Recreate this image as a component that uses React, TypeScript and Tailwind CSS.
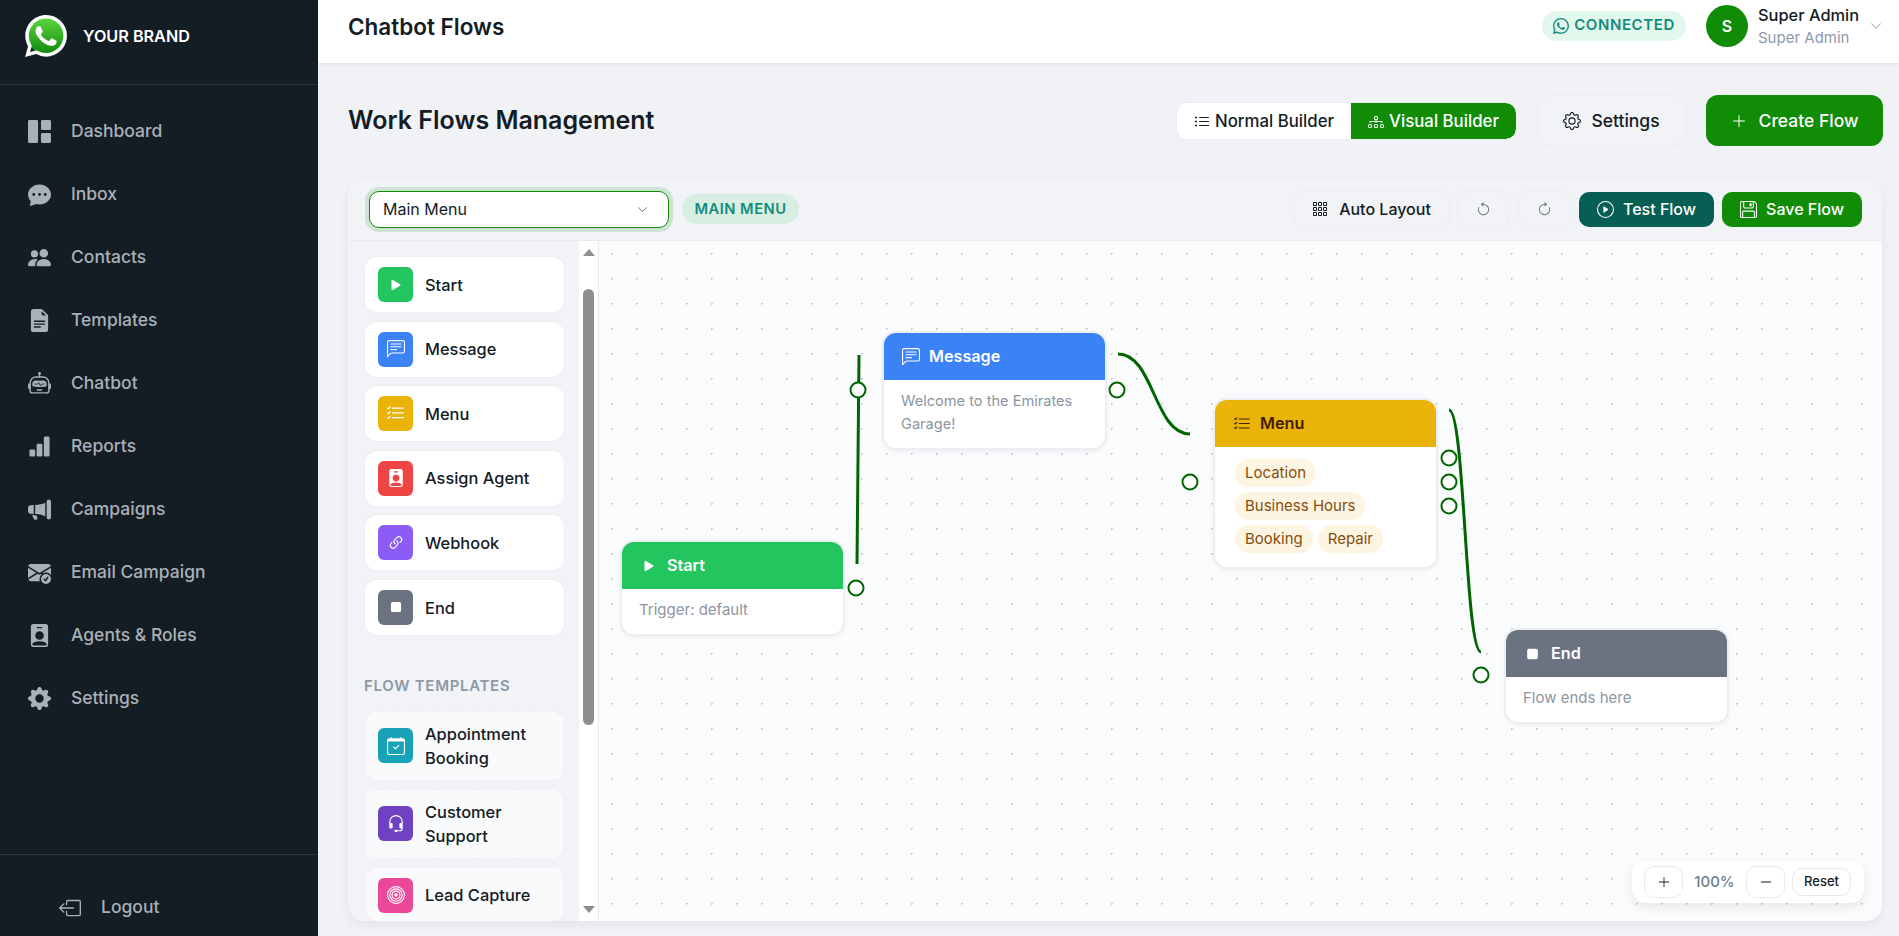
import React from "react";
import {
  BsGrid1X2Fill, BsChatDotsFill, BsPeopleFill, BsFileEarmarkTextFill, BsRobot, BsBarChartFill, BsMegaphoneFill,
  BsEnvelopeCheckFill, BsPersonBadgeFill, BsGearFill, BsBoxArrowLeft, BsWhatsapp, BsChevronDown, BsListUl,
  BsDiagram3, BsGear, BsPlusLg, BsDashLg, BsGrid3X3Gap, BsArrowCounterclockwise, BsArrowClockwise, BsPlayCircle, BsFloppy,
  BsPlayFill, BsChatLeftText, BsListCheck, BsLink45Deg, BsStopFill, BsCalendarCheck, BsHeadset, BsBullseye,
} from "react-icons/bs";

const nav: [React.ComponentType<{ className?: string }>, string][] = [
  [BsGrid1X2Fill, "Dashboard"],
  [BsChatDotsFill, "Inbox"],
  [BsPeopleFill, "Contacts"],
  [BsFileEarmarkTextFill, "Templates"],
  [BsRobot, "Chatbot"],
  [BsBarChartFill, "Reports"],
  [BsMegaphoneFill, "Campaigns"],
  [BsEnvelopeCheckFill, "Email Campaign"],
  [BsPersonBadgeFill, "Agents & Roles"],
  [BsGearFill, "Settings"],
];

const palette: [React.ComponentType<{ className?: string }>, string, string, string][] = [
  [BsPlayFill, "Start", "bg-[#22c55e]", "w-[18px] h-[18px]"],
  [BsChatLeftText, "Message", "bg-[#3b82f6]", "w-[18px] h-[18px]"],
  [BsListCheck, "Menu", "bg-[#eab308]", "w-[19px] h-[19px]"],
  [BsPersonBadgeFill, "Assign Agent", "bg-[#ef4444]", "w-[18px] h-[18px]"],
  [BsLink45Deg, "Webhook", "bg-[#8b5cf6]", "w-[18px] h-[18px]"],
  [BsStopFill, "End", "bg-[#6b7280]", "w-[18px] h-[18px]"],
];

const templates: [React.ComponentType<{ className?: string }>, string, string, string][] = [
  [BsCalendarCheck, "Appointment Booking", "bg-[#17a2b8]", "h-[70px]"],
  [BsHeadset, "Customer Support", "bg-[#6f42c1]", "h-[70px]"],
  [BsBullseye, "Lead Capture", "bg-[#ec4899] ", "h-[55px] pt-[2px]"],
];

function Logo() {
  return (
    <svg viewBox="0 0 24 24" className="w-[42px] h-[42px] shrink-0">
      <defs>
        <linearGradient id="wa" x1="0" y1="0" x2="0" y2="1">
          <stop offset="0" stopColor="#5fd63f" />
          <stop offset="1" stopColor="#0c8a0c" />
        </linearGradient>
      </defs>
      <circle cx="12" cy="12" r="10.6" fill="url(#wa)" />
      <path
        fill="#fff"
        d="M17.472 14.382c-.297-.149-1.758-.867-2.03-.967-.273-.099-.471-.148-.67.15-.197.297-.767.966-.94 1.164-.173.199-.347.223-.644.075-.297-.15-1.255-.463-2.39-1.475-.883-.788-1.48-1.761-1.653-2.059-.173-.297-.018-.458.13-.606.134-.133.298-.347.446-.52.149-.174.198-.298.298-.497.099-.198.05-.371-.025-.52-.075-.149-.669-1.612-.916-2.207-.242-.579-.487-.5-.669-.51-.173-.008-.371-.01-.57-.01-.198 0-.52.074-.792.372-.272.297-1.04 1.016-1.04 2.479 0 1.462 1.065 2.875 1.213 3.074.149.198 2.096 3.2 5.077 4.487.709.306 1.262.489 1.694.625.712.227 1.36.195 1.871.118.571-.085 1.758-.719 2.006-1.413.248-.694.248-1.289.173-1.413-.074-.124-.272-.198-.57-.347m-5.421 7.403h-.004a9.87 9.87 0 01-5.031-1.378l-.361-.214-3.741.982.998-3.648-.235-.374a9.86 9.86 0 01-1.51-5.26c.001-5.45 4.436-9.884 9.888-9.884 2.64 0 5.122 1.03 6.988 2.898a9.825 9.825 0 012.893 6.994c-.003 5.45-4.437 9.884-9.885 9.884m8.413-18.297A11.815 11.815 0 0012.05 0C5.495 0 .16 5.335.157 11.892c0 2.096.547 4.142 1.588 5.945L.057 24l6.305-1.654a11.882 11.882 0 005.683 1.448h.005c6.554 0 11.89-5.335 11.893-11.893a11.821 11.821 0 00-3.48-8.413Z"
      />
    </svg>
  );
}

function Port({ className }: { className: string }) {
  return <div className={"absolute w-[17px] h-[17px] rounded-full border-2 border-[#006400] bg-white -translate-x-1/2 -translate-y-1/2 " + className} />;
}

function Node({ pos, head, icon, title, titleColor, children }: { pos: string; head: string; icon: React.ReactNode; title: string; titleColor: string; children: React.ReactNode }) {
  return (
    <div className={"absolute w-[221px] rounded-[12px] bg-white shadow-[0_0_0_2px_#eceef1,0_2px_6px_rgba(0,0,0,0.08)] overflow-hidden " + pos}>
      <div className={"h-[47px] flex items-center gap-[9px] pl-[17px] text-[16.2px] font-semibold " + head + " " + titleColor}>
        <span className="w-[19px] flex justify-center">{icon}</span>
        <span>{title}</span>
      </div>
      {children}
    </div>
  );
}

function Chip({ children }: { children: React.ReactNode }) {
  return <span className="h-[28px] px-[10px] flex items-center rounded-full bg-[#fdf5e2] text-[#854d0e] text-[15px]">{children}</span>;
}

export default function App() {
  return (
    <div className="flex h-[936px] w-full overflow-hidden bg-[#f0f2f5] font-['Inter',sans-serif] text-[#141c24]">
      <aside className="w-[318px] shrink-0 bg-[#141c24] flex flex-col">
        <div className="h-[85px] border-b border-[#2a323b] flex items-center pl-[25px] pb-[13px] gap-[16px]">
          <Logo />
          <span className="text-white text-[16.2px] font-semibold pt-[2px]">YOUR BRAND</span>
        </div>
        <nav className="pt-[15px] flex-1">
          {nav.map(([Icon, label]) => (
            <div key={label} className="h-[63px] flex items-center pl-[28px] gap-[20px] text-[#a9b0b8] text-[17.5px] font-medium">
              <Icon className="w-[23px] h-[23px] shrink-0" />
              <span>{label}</span>
            </div>
          ))}
        </nav>
        <div className="h-[82px] border-t border-[#2a323b] flex items-center pl-[59px] pt-[24px] gap-[20px] text-[#a9b0b8] text-[17.5px] font-medium">
          <BsBoxArrowLeft className="w-[22px] h-[22px]" />
          <span>Logout</span>
        </div>
      </aside>

      <main className="flex-1 min-w-0 flex flex-col">
        <header className="h-[63px] shrink-0 bg-white shadow-[0_1px_4px_rgba(0,0,0,0.08)] flex items-center pl-[30px] pr-[17px]">
          <h1 className="text-[22.5px] font-semibold mb-[10px]">Chatbot Flows</h1>
          <div className="ml-auto h-[30px] w-[144px] flex items-center justify-center gap-[5px] rounded-full bg-[#e3f8ec] text-[#128c7e] text-[15px] font-semibold tracking-[0.6px] mb-[12px]">
            <BsWhatsapp className="w-[16px] h-[16px]" />
            <span>CONNECTED</span>
          </div>
          <div className="ml-[20px] w-[42px] h-[42px] mb-[11px] rounded-full bg-[#108c07] text-white flex items-center justify-center text-[16px] font-semibold">S</div>
          <div className="ml-[10px] w-[112px] mb-[11px] flex flex-col gap-[4px] whitespace-nowrap">
            <span className="text-[16.4px] leading-[19px] font-medium">Super Admin</span>
            <span className="text-[15px] leading-[18px] text-[#8d99a6]">Super Admin</span>
          </div>
          <BsChevronDown className="w-[12px] h-[12px] text-[#8d99a6] mb-[11px]" />
        </header>

        <div className="flex-1 min-h-0 flex flex-col pl-[30px] pr-[17px] pt-[32px] pb-[15px]">
          <div className="h-[51px] mb-[32px] -mr-[1px] shrink-0 flex items-center">
            <h2 className="text-[25px] font-semibold">Work Flows Management</h2>
            <div className="ml-auto h-[36px] flex rounded-[10px] overflow-hidden bg-white text-[16.8px] font-medium w-[339px] shadow-[0_0_0_1px_#eceef1]">
              <div className="w-[174px] pt-[2px] flex items-center justify-center gap-[5px]"><BsListUl className="w-[16px] h-[16px]" />Normal Builder</div>
              <div className="flex-1 pt-[2px] bg-[#108c07] text-white flex items-center justify-center gap-[5px] rounded-r-[10px]"><BsDiagram3 className="w-[16px] h-[16px]" />Visual Builder</div>
            </div>
            <div className="ml-[21px] w-[149px] h-[51px] pt-[1px] flex items-center justify-center gap-[10px] rounded-[12px] border border-[#eaedf0] bg-[#f1f3f6] text-[17.5px] font-medium">
              <BsGear className="w-[18px] h-[18px]" />Settings
            </div>
            <div className="ml-[20px] w-[177px] h-[51px] pt-[1px] flex items-center justify-center gap-[12px] rounded-[12px] bg-[#108c07] text-white text-[17.5px] font-medium">
              <BsPlusLg className="w-[16px] h-[16px]" />Create Flow
            </div>
          </div>

          <section className="flex-1 min-h-0 rounded-[16px] bg-[#f1f3f6] shadow-[0_4px_12px_rgba(0,0,0,0.06)] overflow-hidden flex flex-col">
            <div className="h-[62px] shrink-0 flex items-center pl-[21px] pr-[20px]">
              <div className="w-[300px] h-[37px] rounded-[10px] bg-white border border-[#108c07] shadow-[0_0_0_4px_rgba(16,140,7,0.15)] flex items-center pl-[13px] pr-[20px] text-[16px] justify-between">
                <span>Main Menu</span>
                <BsChevronDown className="w-[11px] h-[11px] text-[#6b7280]" />
              </div>
              <div className="ml-[13px] w-[117px] h-[30px] rounded-full bg-[#d9eee3] text-[#128c7e] text-[14.7px] font-semibold tracking-[0.5px] flex items-center justify-center">MAIN MENU</div>
              <div className="ml-auto w-[157px] h-[37px] rounded-[10px] border border-[#ebedf1] flex items-center justify-center gap-[11px] text-[16px] font-medium">
                <BsGrid3X3Gap className="w-[16px] h-[16px]" />Auto Layout
              </div>
              <div className="ml-[7px] w-[53px] h-[37px] rounded-[10px] border border-[#ebedf1] flex items-center justify-center text-[#6b7280]"><BsArrowCounterclockwise className="w-[15px] h-[15px]" /></div>
              <div className="ml-[8px] w-[53px] h-[37px] rounded-[10px] border border-[#ebedf1] flex items-center justify-center text-[#6b7280]"><BsArrowClockwise className="w-[15px] h-[15px]" /></div>
              <div className="ml-[8px] w-[135px] h-[35px] rounded-[10px] bg-[#075e54] text-white text-[16px] font-medium flex items-center justify-center gap-[9px]"><BsPlayCircle className="w-[17px] h-[17px]" />Test Flow</div>
              <div className="ml-[8px] w-[140px] h-[35px] rounded-[10px] bg-[#108c07] text-white text-[16px] font-medium flex items-center justify-center gap-[9px]"><BsFloppy className="w-[17px] h-[17px]" />Save Flow</div>
            </div>

            <div className="flex-1 min-h-0 flex border-t border-[#e8eaee]">
              <div className="w-[231px] shrink-0 overflow-hidden pl-[17px] pr-[15px] pt-[16px]">
                <div className="flex flex-col gap-[9.6px]">
                  {palette.map(([Icon, label, bg, size]) => (
                    <div key={label} className="h-[55px] rounded-[12px] bg-white shadow-[0_0_0_1px_#eceef1] flex items-center pl-[13px] gap-[12px] text-[16.4px] font-medium">
                      <span className={"w-[35px] h-[35px] rounded-[6px] flex items-center justify-center text-white " + bg}><Icon className={size} /></span>
                      <span className="pt-[1px]">{label}</span>
                    </div>
                  ))}
                </div>
                <div className="mt-[41px] mb-[15px] -ml-[1px] text-[15px] leading-[20px] font-semibold tracking-[0.7px] text-[#8b9aa7]">FLOW TEMPLATES</div>
                <div className="flex flex-col gap-[8px]">
                  {templates.map(([Icon, label, bg, h]) => (
                    <div key={label} className={"shrink-0 rounded-[12px] bg-[#f9fafc] border border-dashed border-[#eceef1] flex items-center pl-[12px] gap-[12px] text-[16.4px] leading-[24px] font-medium " + h}>
                      <span className={"w-[35px] h-[35px] shrink-0 rounded-[6px] flex items-center justify-center text-white " + bg}><Icon className="w-[18px] h-[18px]" /></span>
                      <span className="w-[125px]">{label}</span>
                    </div>
                  ))}
                </div>
              </div>

              <div className="w-[20px] shrink-0 bg-white border-r border-[#e8eaee] flex flex-col items-center relative">
                <div className="mt-[8px] w-0 h-0 border-x-[6.5px] border-x-transparent border-b-[7px] border-b-[#8e8e8e]" />
                <div className="mt-[33px] w-[11px] h-[436px] rounded-full bg-[#8e8e8e]" />
                <div className="mt-auto mb-[8px] w-0 h-0 border-x-[6.5px] border-x-transparent border-t-[7px] border-t-[#8e8e8e]" />
              </div>

              <div className="flex-1 relative overflow-hidden bg-[#fafbfd] bg-[radial-gradient(circle,#c6ccd2_1px,transparent_1px)] bg-[length:25px_25px] bg-[position:0px_0px]">
                <svg className="absolute inset-0 w-full h-full" fill="none" stroke="#006400" strokeWidth="3">
                  <path d="M258 323 C259 253 259 184 260 114" />
                  <path d="M519 113 C555 113 555 193 591 193" />
                  <path d="M850 169 C866 169 866 411 882 411" />
                </svg>
                <Node pos="left-[23px] top-[301px]" head="bg-[#22c55e]" titleColor="text-white" icon={<BsPlayFill className="w-[18px] h-[18px]" />} title="Start">
                  <div className="h-[45px] pl-[17px] pb-[2px] flex items-center text-[15px] text-[#8b95a1]">Trigger: default</div>
                </Node>
                <Node pos="left-[285px] top-[92px]" head="bg-[#3b82f6]" titleColor="text-white" icon={<BsChatLeftText className="w-[18px] h-[18px]" />} title="Message">
                  <div className="h-[68px] pl-[17px] pr-[10px] pt-[10px] text-[14.6px] leading-[23px] text-[#8b95a1]">Welcome to the Emirates Garage!</div>
                </Node>
                <Node pos="left-[616px] top-[159px]" head="bg-[#eab308]" titleColor="text-[#422006]" icon={<BsListCheck className="w-[18px] h-[18px]" />} title="Menu">
                  <div className="h-[120px] pl-[20px] pr-[14px] pt-[12px] flex flex-col items-start gap-[5px]">
                    <Chip>Location</Chip>
                    <Chip>Business Hours</Chip>
                    <div className="flex gap-[5px]">
                      <Chip>Booking</Chip>
                      <Chip>Repair</Chip>
                    </div>
                  </div>
                </Node>
                <Node pos="left-[907px] top-[389px]" head="bg-[#6b7280]" titleColor="text-white" icon={<BsStopFill className="w-[20px] h-[20px]" />} title="End">
                  <div className="h-[45px] pl-[17px] pb-[2px] flex items-center text-[15px] text-[#8b95a1]">Flow ends here</div>
                </Node>
                <Port className="left-[259px] top-[149px]" />
                <Port className="left-[518px] top-[149px]" />
                <Port className="left-[257px] top-[347px]" />
                <Port className="left-[591px] top-[241px]" />
                <Port className="left-[850px] top-[217px]" />
                <Port className="left-[850px] top-[241px]" />
                <Port className="left-[850px] top-[265px]" />
                <Port className="left-[882px] top-[434px]" />
                <div className="absolute right-[18px] bottom-[18px] w-[232px] h-[42px] rounded-[14px] bg-white shadow-[0_4px_12px_rgba(0,0,0,0.08)] flex items-center pl-[12px]">
                  <div className="w-[39px] h-[32px] rounded-[10px] border border-[#e8eaee] flex items-center justify-center"><BsPlusLg className="w-[14px] h-[14px]" /></div>
                  <span className="w-[63px] text-center text-[15px] font-medium text-[#6b7d8c]">100%</span>
                  <div className="w-[39px] h-[32px] rounded-[10px] border border-[#e8eaee] flex items-center justify-center"><BsDashLg className="w-[14px] h-[14px]" /></div>
                  <div className="ml-[7px] w-[59px] h-[28px] rounded-[10px] border border-[#e8eaee] flex items-center justify-center text-[13px] font-medium">Reset</div>
                </div>
              </div>
            </div>
          </section>
        </div>
      </main>
    </div>
  );
}
